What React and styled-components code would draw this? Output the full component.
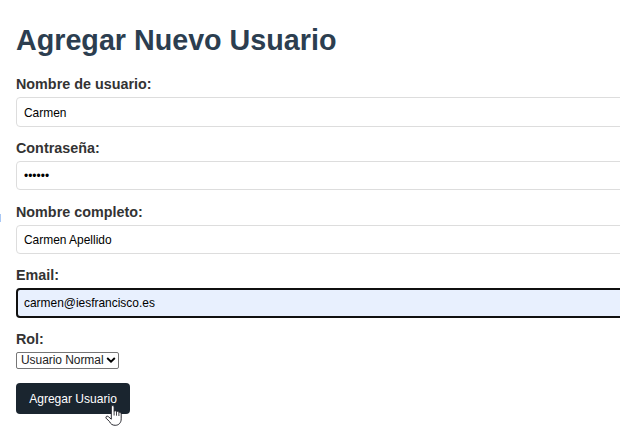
import React from "react";
import styled, { createGlobalStyle } from "styled-components";

const GlobalStyle = createGlobalStyle`
  * { box-sizing: border-box; }
  body {
    margin: 0;
    background: #fff;
    color: #333;
    font-family: "Liberation Sans", Arial, sans-serif;
    overflow: hidden;
  }
`;

const Page = styled.main`
  position: relative;
  height: 442px;
  padding: 22px 0 0 16px;
  overflow: hidden;
`;

const EdgeMark = styled.span`
  position: absolute;
  left: 0;
  top: 214px;
  width: 1px;
  height: 8px;
  background: #a9c8f5;
`;

const Title = styled.h1`
  margin: 0 0 16.4px;
  height: 36px;
  line-height: 36px;
  font-size: 28.7px;
  color: #2c3e50;
  white-space: nowrap;
`;

const Form = styled.form`
  display: flex;
  flex-direction: column;
  align-items: flex-start;
`;

const Field = styled.div`
  width: 640px;
  height: 63.6px;
`;

const Label = styled.label`
  display: block;
  height: 20px;
  margin-bottom: 3px;
  line-height: 20.8px;
  font-size: 14.35px;
  font-weight: bold;
  white-space: nowrap;
`;

const Input = styled.input`
  display: block;
  width: 100%;
  height: 29.5px;
  padding: 1px 7px 0;
  border: ${(p) => (p.$active ? "2px solid #101010" : "1px solid #ddd")};
  padding-left: ${(p) => (p.$active ? "6px" : "7px")};
  border-radius: 4px;
  outline: none;
  background: ${(p) => (p.$active ? "#e8f0fe" : "#fff")};
  color: #000;
  font: 11.95px "Liberation Sans", Arial, sans-serif;
`;

const Role = styled.div`
  height: 51px;
`;

const Select = styled.div`
  display: flex;
  align-items: center;
  justify-content: space-between;
  width: 103px;
  height: 17px;
  padding: 0 2px 0 4px;
  border: 1px solid #767676;
  border-radius: 2px;
  background: #fff;
  color: #222;
  font-size: 12px;
  letter-spacing: -0.06px;
  line-height: 15px;
  white-space: nowrap;
`;

const Button = styled.button`
  position: relative;
  width: 114px;
  height: 31px;
  margin-top: 3.6px;
  padding: 0;
  border: 0;
  border-radius: 4px;
  background: #1a252f;
  color: #fff;
  font: 12.05px "Liberation Sans", Arial, sans-serif;
  white-space: nowrap;
`;

const Pointer = styled.svg`
  position: absolute;
  left: 89px;
  top: 22px;
  overflow: visible;
`;

const fields = [
  { id: "usuario", label: "Nombre de usuario:", value: "Carmen", type: "text" },
  { id: "clave", label: "Contraseña:", value: "123456", type: "password" },
  { id: "nombre", label: "Nombre completo:", value: "Carmen Apellido", type: "text" },
  { id: "email", label: "Email:", value: "carmen@iesfrancisco.es", type: "text", active: true },
];

export default function App() {
  return (
    <Page>
      <GlobalStyle />
      <EdgeMark />
      <Title>Agregar Nuevo Usuario</Title>
      <Form>
        {fields.map((f) => (
          <Field key={f.id}>
            <Label htmlFor={f.id}>{f.label}</Label>
            <Input id={f.id} type={f.type} defaultValue={f.value} $active={f.active} spellCheck={false} />
          </Field>
        ))}
        <Role>
          <Label as="div">Rol:</Label>
          <Select role="combobox" aria-label="Rol">
            <span>Usuario Normal</span>
            <svg width="10" height="6" viewBox="0 0 10 6" fill="none">
              <path d="M1.200 1 5 4.600 8.800 1" stroke="#000" strokeWidth="1.9" />
            </svg>
          </Select>
        </Role>
        <Button type="button">
          Agregar Usuario
          <Pointer width="17" height="21" viewBox="0 0 17 21">
            <path
              d="M6.300 1.800C6.300.2 9.100.2 9.100 1.800V6.200c.6-.8 2.200-.6 2.400.5.7-.7 2.200-.4 2.400.7.9-.5 2.300.1 2.300 1.500v4.900c0 3.900-2.300 6.500-6 6.500-2.900 0-4.500-1.300-5.700-3.700L1.100 13.200C.4 11.600 1.900 10.500 3.300 11.600L6.300 14.200Z"
              fill="#fff"
              stroke="#1c1c24"
              strokeWidth=".95"
              strokeLinejoin="round"
            />
            <path d="M9.100 6v4.500M11.500 6.800v3.900M13.900 7.500v3.500" stroke="#1c1c24" strokeWidth=".85" />
          </Pointer>
        </Button>
      </Form>
    </Page>
  );
}
